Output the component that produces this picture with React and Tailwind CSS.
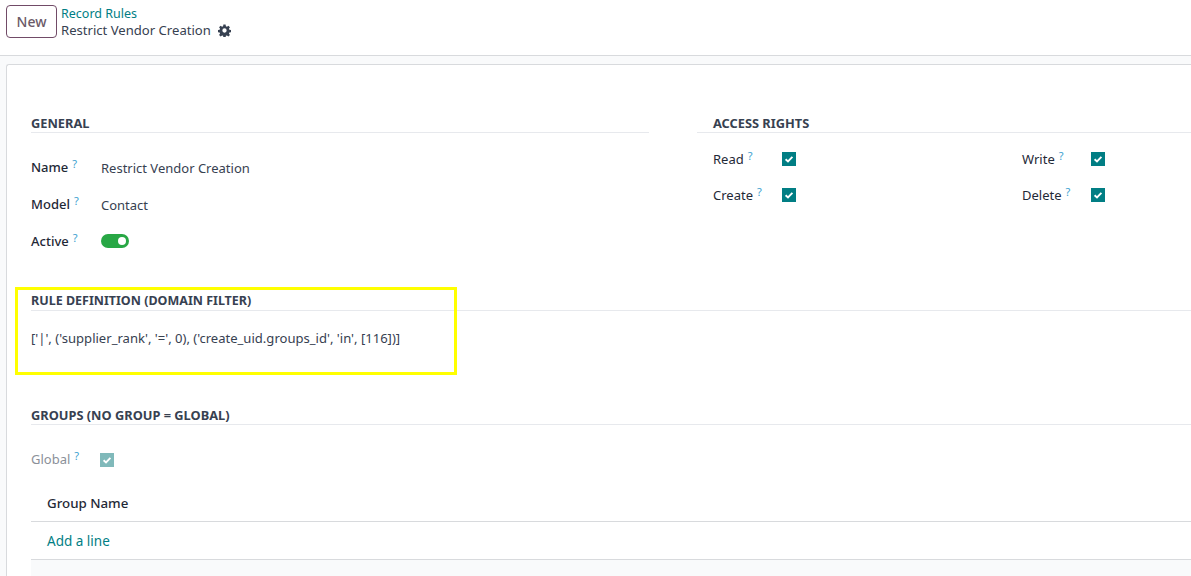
const font = { fontFamily: '"Noto Sans", "Open Sans", sans-serif' };

function Help() {
  return <sup className="ml-[4px] relative top-[-4px] text-[11px] leading-none font-normal text-[#3d9fd0]">?</sup>;
}

function Check({ muted }) {
  return (
    <span className={`flex h-[14px] w-[14px] items-center justify-center ${muted ? "bg-[#80b9ba]" : "bg-[#017e84]"}`}>
      <svg width="10" height="10" viewBox="0 0 10 10" fill="none">
        <path d="M1.6 5.2 L4 7.4 L8.4 2.9" stroke="#fff" strokeWidth="1.9" />
      </svg>
    </span>
  );
}

function Heading({ children, className = "" }) {
  return (
    <div className={`h-[19px] border-b border-[#e7e9ed] leading-[17px] font-bold text-[#374151] ${className}`}>
      {children}
    </div>
  );
}

function Perm({ label }) {
  return (
    <div className="flex h-[36px] items-center">
      <span className="w-[69px] pt-[2px] text-[13px] text-[#1f2937] whitespace-nowrap">
        {label}
        <Help />
      </span>
      <Check />
    </div>
  );
}

function Field({ label, className, labelClass = "", children }) {
  return (
    <div className={`flex items-center ${className}`}>
      <span className={`w-[70px] text-[13px] font-medium text-[#1f2937] whitespace-nowrap ${labelClass}`}>
        {label}
        <Help />
      </span>
      {children}
    </div>
  );
}

export default function App() {
  return (
    <div style={font} className="relative h-[576px] w-[1191px] overflow-hidden bg-[#f9fafb] text-[13px] text-[#374151]">
      <header className="flex h-[56px] items-start border-b border-[#d8dadd] bg-white pl-[6px] pt-[5px]">
        <button className="h-[33px] w-[51px] rounded-[4px] border border-[#714b67] text-[14px] font-medium text-[#6b5a68]">New</button>
        <div className="ml-[4px] leading-[17px]">
          <div className="text-[12.5px] leading-[17px] text-[#017e84]">Record Rules</div>
          <div className="flex items-center text-[13.1px] text-[#374151]">
            Restrict Vendor Creation
            <svg className="ml-[7px]" width="13" height="13" viewBox="0 0 24 24" fill="#374151">
              <path fillRule="evenodd" d="M10 1h4l.6 3.1 1.9.8 2.7-1.8 2.8 2.8-1.8 2.7.8 1.9 3 .5v4l-3 .6-.8 1.9 1.8 2.6-2.8 2.8-2.7-1.8-1.9.8-.6 3.2h-4l-.6-3.2-1.9-.8-2.7 1.8-2.8-2.8 1.8-2.6-.8-1.9-3-.6v-4l3-.5.8-1.9-1.8-2.7 2.8-2.8 2.7 1.8 1.9-.8L10 1Zm2 7a4 4 0 1 0 0 8 4 4 0 0 0 0-8Z" />
            </svg>
          </div>
        </div>
      </header>

      <main className="ml-[6px] mt-[8px] h-[520px] rounded-tl-[3px] border-l border-t border-[#d8dadd] bg-white pl-[24px] pt-[49px]">
        <section className="flex h-[178px]">
          <div className="w-[618px]">
            <Heading className="pt-[1px] text-[12.8px]">GENERAL</Heading>
            <div className="mt-[17px]">
              <Field label="Name" className="h-[36px]"><span className="pt-[2px] text-[13px]">Restrict Vendor Creation</span></Field>
              <Field label="Model" className="h-[37px] pt-[1px]"><span className="pt-[1px] text-[13px]">Contact</span></Field>
              <Field label="Active" className="h-[36px]" labelClass="pt-[1px]">
                <span className="flex h-[14px] w-[28px] items-center justify-end rounded-full bg-[#28a745] pr-[3px]">
                  <span className="h-[8px] w-[8px] rounded-full bg-white" />
                </span>
              </Field>
            </div>
          </div>
          <div className="ml-[48px] flex-1">
            <Heading className="pl-[16px] pt-[1px] text-[12.8px]">ACCESS RIGHTS</Heading>
            <div className="mt-[8px] grid grid-cols-[309px_1fr] pl-[16px]">
              <Perm label="Read" />
              <Perm label="Write" />
              <Perm label="Create" />
              <Perm label="Delete" />
            </div>
          </div>
        </section>

        <section>
          <Heading className="text-[12.5px]">RULE DEFINITION (DOMAIN FILTER)</Heading>
          <p className="mt-[19px] text-[13.07px] leading-[17px]">['|', ('supplier_rank', '=', 0), ('create_uid.groups_id', 'in', [116])]</p>
        </section>

        <section className="mt-[59px]">
          <Heading className="pt-[1px] text-[12.8px]">GROUPS (NO GROUP = GLOBAL)</Heading>
          <div className="mt-[17px] flex h-[36px] items-center">
            <span className="w-[69px] text-[13px] text-[#8b9099]">Global<Help /></span>
            <Check muted />
          </div>
          <div className="mt-[8px] flex h-[36px] items-center border-b border-[#d8dadd] pl-[16px] text-[13.3px] font-medium text-[#1f2937]">Group Name</div>
          <div className="flex h-[38px] items-center border-b border-[#d8dadd] pl-[16px] pt-[2px] text-[13.5px] text-[#017e84]">Add a line</div>
          <div className="h-[40px] bg-[#f9fafb]" />
        </section>
      </main>

      <div className="absolute left-[15px] top-[287px] h-[88px] w-[442px] border-[3px] border-[#ffff00]" />
    </div>
  );
}
